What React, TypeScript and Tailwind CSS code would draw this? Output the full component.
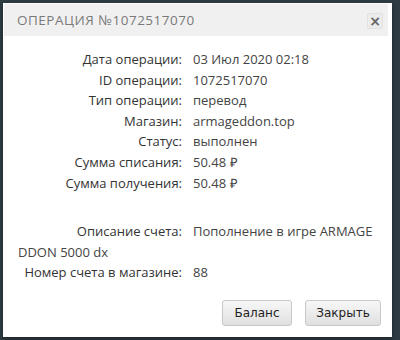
export default function App() {
    const rows = [
        { label: "Дата операции:", value: "03 Июл 2020 02:18" },
        { label: "ID операции:", value: "1072517070" },
        { label: "Тип операции:", value: "перевод" },
        { label: "Магазин:", value: "armageddon.top" },
        { label: "Статус:", value: "выполнен" },
        { label: "Сумма списания:", value: "50.48 ₽" },
        { label: "Сумма получения:", value: "50.48 ₽" },
    ];

    return (
        <div className="w-[400px] h-[340px] bg-[#2e3b43] pt-[3px] pl-[3px] overflow-hidden">
            <div className="w-[389px] h-[334px] bg-white p-[1px] pr-[4px] shadow-[0_2px_4px_rgba(0,0,0,0.4)] flex flex-col">
                {/* Header */}
                <div className="h-[32px] bg-[#f0f0f0] flex items-center justify-between pl-[13px] pr-[5px]">
                    <span className="text-[13.5px] tracking-[0.5px] text-[#7a7a7a] font-['Open_Sans',sans-serif]">
                        ОПЕРАЦИЯ №1072517070
                    </span>
                    <button className="w-[16px] h-[16px] mt-[2px] border border-[#e2e2e2] bg-[#ececec] rounded-[2px] flex items-center justify-center text-[#666] text-[14px] font-bold leading-none font-['DejaVu_Sans',sans-serif]">
                        ×
                    </button>
                </div>

                {/* Body */}
                <div className="flex-1 pl-[14px] pr-[12px] pt-[13px] text-[13px] leading-[20.6px] font-['Open_Sans',sans-serif]">
                    {rows.map((row) => (
                        <div key={row.label}>
                            <span className="inline-block w-[164px] text-right text-[#333]">{row.label}</span>
                            <span className="ml-[11px] text-[#444]">{row.value}</span>
                        </div>
                    ))}
                    <div className="mt-[28px] break-all">
                        <span className="inline-block w-[164px] text-right text-[#333] break-normal">Описание счета:</span>
                        <span className="ml-[11px] text-[#444]">Пополнение в игре ARMAGEDDON 5000 dx</span>
                    </div>
                    <div>
                        <span className="inline-block w-[164px] text-right text-[#333]">Номер счета в магазине:</span>
                        <span className="ml-[11px] text-[#444]">88</span>
                    </div>
                </div>

                {/* Footer */}
                <div className="flex justify-end gap-[13px] pr-[7px] pb-[10px] font-['DejaVu_Sans',sans-serif] text-[12px] text-[#222]">
                    <button className="w-[70px] h-[26px] rounded-[3px] border border-[#c8c8c8] bg-gradient-to-b from-[#f7f7f7] to-[#e0e0e0]">
                        Баланс
                    </button>
                    <button className="w-[76px] h-[26px] rounded-[3px] border border-[#c8c8c8] bg-gradient-to-b from-[#f7f7f7] to-[#e0e0e0]">
                        Закрыть
                    </button>
                </div>
            </div>
        </div>
    );
}
